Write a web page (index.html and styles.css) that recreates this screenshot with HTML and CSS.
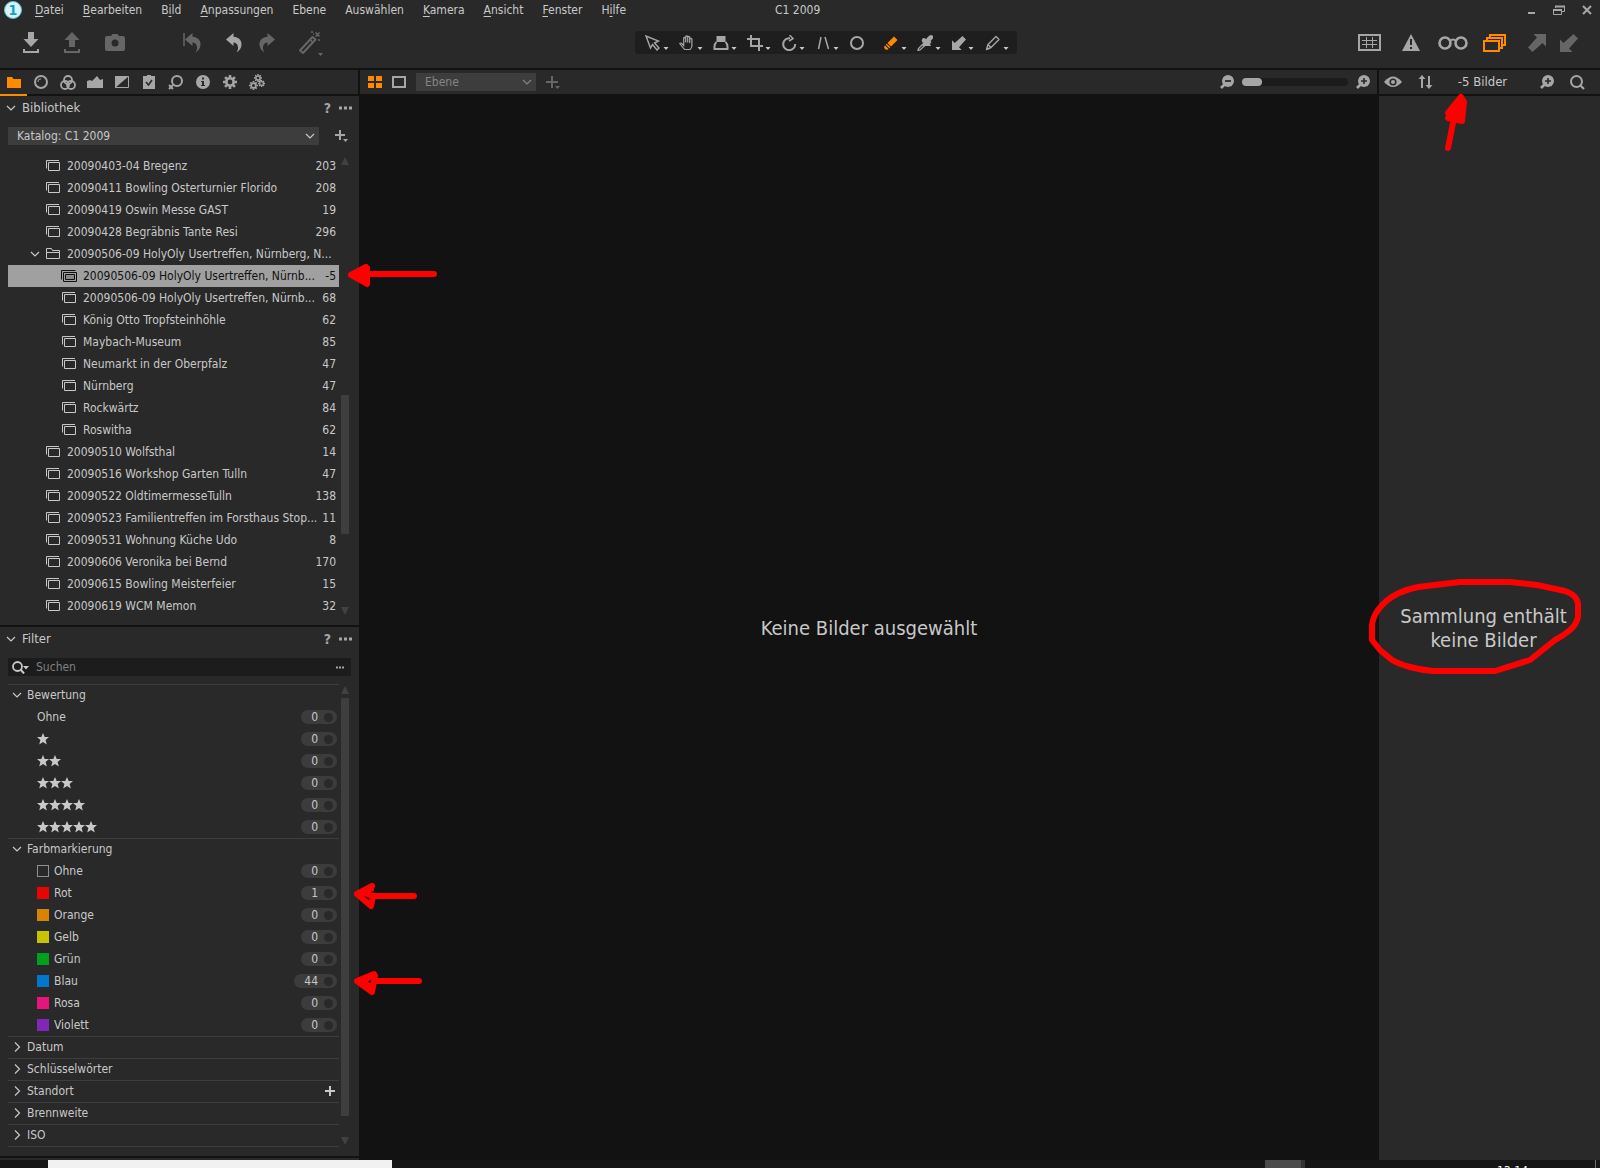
FILE: index.html
```html
<!DOCTYPE html>
<html lang="de">
<head>
  <meta charset="UTF-8" />
  <meta name="viewport" content="width=device-width, initial-scale=1" />
  <title>C1 2009</title>
  <link rel="stylesheet" href="styles.css">
</head>
<body>
  <!-- shared icons -->
  <svg class="defs" width="0" height="0" aria-hidden="true">
    <symbol id="star" viewBox="0 0 12 12"><path d="M6 0l1.700 4H12L8.600 6.900 9.800 11.600 6 8.900 2.200 11.600 3.400 6.900 0 4h4.300z" fill="currentColor" /></symbol>
    <symbol id="album" viewBox="0 0 15 12"><path d="M.5 8.500V.5h12.500M2.500 2.500h11v8h-11z" fill="none" stroke="currentColor" /></symbol>
    <symbol id="album-open" viewBox="0 0 16 13"><path d="M.5 9.500V.5h14M2.500 2.500h13v9h-13z" fill="none" stroke="currentColor" /><path d="M4.500 4.500h9v5h-9z" fill="#888" stroke="currentColor" /></symbol>
    <symbol id="folder" viewBox="0 0 15 12"><path d="M.5 10.500v-10h5l1 2h7v8zM.5 4.500h13" fill="none" stroke="currentColor" /></symbol>
    <symbol id="down" viewBox="0 0 10 10"><path d="M1 3l4 4 4-4" fill="none" stroke="currentColor" stroke-width="1.200" /></symbol>
    <symbol id="right" viewBox="0 0 10 10"><path d="M3 .5l4.500 4.500L3 9.500" fill="none" stroke="currentColor" stroke-width="1.200" /></symbol>
    <symbol id="caret" viewBox="0 0 6 4"><path d="M.5 0h5L3 3z" fill="currentColor" /></symbol>
    <symbol id="tri-up" viewBox="0 0 8 8"><path d="M4 0l4 8H0z" fill="currentColor" /></symbol>
    <symbol id="tri-down" viewBox="0 0 8 8"><path d="M4 8l4-8H0z" fill="currentColor" /></symbol>
    <symbol id="plus" viewBox="0 0 12 12"><path d="M6 1v10M1 6h10" stroke="currentColor" stroke-width="2" /></symbol>
    <symbol id="dots" viewBox="0 0 13 4"><path d="M0 .5h3v3H0zM5 .5h3v3H5zM10 .5h3v3h-3z" fill="currentColor" /></symbol>
    <symbol id="zoom-in" viewBox="0 0 14 14"><circle cx="8" cy="6" r="6" fill="currentColor" /><path d="M5 9l-4 4" stroke="currentColor" stroke-width="2.600" /><path d="M8 3v6M5 6h6" stroke="#292929" stroke-width="1.600" /></symbol>
    <symbol id="zoom-out" viewBox="0 0 14 14"><circle cx="8" cy="6" r="6" fill="currentColor" /><path d="M5 9l-4 4" stroke="currentColor" stroke-width="2.600" /><path d="M5 6h6" stroke="#292929" stroke-width="1.800" /></symbol>
    <symbol id="undo" viewBox="0 0 16 20"><path d="M0 6.500L7.500 0v3.800c6 .6 8.300 4.200 8 8.200-.2 3.200-2 5.800-5 7.500 1.500-2.500 2-4.500 1.200-6.700C11 10.700 9.800 9.800 7.500 9.600V13z" fill="currentColor" /></symbol>
    <symbol id="arrow-sw" viewBox="0 0 18 18"><path d="M0 5.500V18h12.500L9 14.500 18 4.500 13.500 0l-10 9z" fill="currentColor" /></symbol>
    <symbol id="gear" viewBox="0 0 14 14"><circle cx="7" cy="7" r="3.700" fill="none" stroke="currentColor" stroke-width="2.600" /><path d="M7 0v2.500M7 11.500V14M0 7h2.500M11.500 7H14M2.050 2.050l1.800 1.800M10.150 10.150l1.800 1.800M2.050 11.950l1.800-1.800M10.150 3.850l1.800-1.800" stroke="currentColor" stroke-width="2.600" /></symbol>
  </svg>

  <div class="app">
    <header class="menubar">
      <svg class="logo" width="18" height="18" viewBox="0 0 18 18"><circle cx="9" cy="9" r="8.500" fill="#d9f2fa" stroke="#5fb9d6" /><text x="9" y="14" text-anchor="middle" class="logo-text">1</text></svg>
      <nav class="menu">
        <a href="#"><u>D</u>atei</a>
        <a href="#"><u>B</u>earbeiten</a>
        <a href="#">B<u>i</u>ld</a>
        <a href="#"><u>A</u>npassungen</a>
        <a href="#">Ebene</a>
        <a href="#">Auswählen</a>
        <a href="#"><u>K</u>amera</a>
        <a href="#"><u>A</u>nsicht</a>
        <a href="#"><u>F</u>enster</a>
        <a href="#">H<u>i</u>lfe</a>
      </nav>
      <div class="title">C1 2009</div>
      <div class="window-buttons">
        <button type="button" aria-label="Minimieren"><svg width="12" height="12"><path d="M3 9h7" stroke="currentColor" stroke-width="2" /></svg></button>
        <button type="button" aria-label="Wiederherstellen"><svg width="12" height="12"><path d="M2.500 4V2.500h9v5H9" fill="none" stroke="currentColor" /><path d="M2 2.500h10M.5 6h8" stroke="currentColor" stroke-width="2" /><path d="M.5 5v5.500h8V5" fill="none" stroke="currentColor" /></svg></button>
        <button type="button" aria-label="Schließen"><svg width="12" height="12"><path d="M2 2l8 8M10 2l-8 8" stroke="currentColor" stroke-width="2" /></svg></button>
      </div>
    </header>

    <div class="toolbar">
      <div class="actions">
        <button type="button" aria-label="Importieren"><svg width="16" height="21"><path d="M5 0h6v7h4.500L8 15 .5 7H5zM0 17h2v2h12v-2h2v4H0z" fill="currentColor" /></svg></button>
        <button type="button" class="dim" aria-label="Exportieren"><svg width="16" height="21"><path d="M5 15h6V8h4.500L8 0 .5 8H5zM0 17h2v2h12v-2h2v4H0z" fill="currentColor" /></svg></button>
        <button type="button" class="dim" aria-label="Kamera"><svg width="20" height="18"><path d="M2 2h4l1.500-2h5L14 2h4q2 0 2 2v11q0 2-2 2H2q-2 0-2-2V4q0-2 2-2z" fill="currentColor" /><circle cx="10" cy="9" r="3.500" fill="#292929" /></svg></button>
        <button type="button" class="dim reset" aria-label="Zurücksetzen"><svg width="18" height="20" viewBox="0 0 18 20"><path d="M1 0v13" stroke="currentColor" stroke-width="1.500" /><use href="#undo" x="2" width="16" height="20" /></svg></button>
        <button type="button" aria-label="Rückgängig"><svg width="16" height="20"><use href="#undo" /></svg></button>
        <button type="button" class="dim redo" aria-label="Wiederholen"><svg width="16" height="20"><use href="#undo" transform="translate(16 0) scale(-1 1)" /></svg></button>
        <button type="button" class="dim wand" aria-label="Automatisch anpassen"><svg width="26" height="26" viewBox="0 0 26 26"><path d="M2 20.500L14.500 7l3 2.500L5 23z" fill="none" stroke="currentColor" stroke-width="2" stroke-linejoin="round" /><path d="M12 9.500l3 3" stroke="currentColor" stroke-width="1.500" /><path d="M17.500 2.500l4 4M21.500 2.500l-4 4M13 2h2M15 4h1M20 10h2" stroke="currentColor" stroke-width="1.500" /><path d="M20 23h5l-2.500 3z" fill="currentColor" /></svg></button>
      </div>

      <div class="tools">
        <button type="button" aria-label="Auswahl"><svg width="16" height="16"><path d="M1 1l4.500 12 2-3.500 4.500 5.500 2-2-4.500-5 4-2z" fill="none" stroke="currentColor" stroke-width="1.400" /></svg><svg class="caret" width="6" height="4"><use href="#caret" /></svg></button>
        <button type="button" aria-label="Verschieben"><svg width="16" height="16"><path d="M5.500 14.500L.7 8.500q.8-1 2 0l2 2V3q1-1 2 0v4.500V1.500q1-1 2 0v6V2q1-1 2 0v6V4q1-1 2.200 0v7q-.4 2.500-1.900 3.500z" fill="none" stroke="currentColor" stroke-width="1.200" /></svg><svg class="caret" width="6" height="4"><use href="#caret" /></svg></button>
        <button type="button" aria-label="Lupe"><svg width="16" height="16"><path d="M3.500 1h9v6h-9z" fill="currentColor" /><path d="M3.500 7Q1 9 1.500 14h13Q15 9 12.500 7" fill="none" stroke="currentColor" stroke-width="2" /></svg><svg class="caret" width="6" height="4"><use href="#caret" /></svg></button>
        <button type="button" aria-label="Zuschneiden"><svg width="16" height="16"><path d="M4 0v11h12M0 4h12v12" fill="none" stroke="currentColor" stroke-width="2" /></svg><svg class="caret" width="6" height="4"><use href="#caret" /></svg></button>
        <button type="button" aria-label="Drehen"><svg width="16" height="16"><path d="M9 3.200A6 6 0 1 0 14.200 9" fill="none" stroke="currentColor" stroke-width="2" /><path d="M8.500 0l3.500 3.500L8 6" fill="none" stroke="currentColor" stroke-width="1.500" /></svg><svg class="caret" width="6" height="4"><use href="#caret" /></svg></button>
        <button type="button" aria-label="Trapezkorrektur"><svg width="16" height="16"><path d="M6 2L3.500 14M10 2l3.500 12" stroke="currentColor" stroke-width="1.500" /></svg><svg class="caret" width="6" height="4"><use href="#caret" /></svg></button>
        <button type="button" aria-label="Flecken entfernen"><svg width="16" height="16"><circle cx="8" cy="8" r="6" fill="none" stroke="currentColor" stroke-width="2" /></svg></button>
        <button type="button" class="on" aria-label="Radierer"><svg width="16" height="16"><path d="M11 1.500L14.500 5l-6.500 6.500L4.500 8zM3.800 8.700l3.500 3.500-1 1-3.500-3.500zM2.100 10.400l3.500 3.500-.6.600q-2 .5-3.200-.7T1.500 11z" fill="currentColor" /></svg><svg class="caret" width="6" height="4"><use href="#caret" /></svg></button>
        <button type="button" aria-label="Pipette"><svg width="16" height="16"><path d="M10 3q3-4 5.500-2.500T13.500 6l1 1-1.500 2 1 2H5L7 8Q4 7 5 4.500T9 4z" fill="currentColor" /><path d="M7 8l-5.500 5.500-.5 2 2-.5L9 9.500" fill="none" stroke="currentColor" stroke-width="1.300" /></svg><svg class="caret" width="6" height="4"><use href="#caret" /></svg></button>
        <button type="button" aria-label="Anpassungen anwenden"><svg width="14" height="14"><use href="#arrow-sw" /></svg><svg class="caret" width="6" height="4"><use href="#caret" /></svg></button>
        <button type="button" aria-label="Pinsel"><svg width="16" height="16"><path d="M1.500 14.500l1.500-5 8-8 3 3-8 8zM3 9.500l3 3" fill="none" stroke="currentColor" stroke-width="1.400" stroke-linejoin="round" /></svg><svg class="caret" width="6" height="4"><use href="#caret" /></svg></button>
      </div>

      <div class="views">
        <button type="button" aria-label="Raster"><svg width="23" height="17"><path d="M1 1h21v15H1z" fill="none" stroke="currentColor" stroke-width="2" /><path d="M4 6.500h15M4 10.500h15M8.500 3v11M14.500 3v11" stroke="currentColor" /></svg></button>
        <button type="button" aria-label="Belichtungswarnung"><svg width="18" height="17"><path d="M9 0l9 17H0z" fill="currentColor" /><path d="M9 5v6M9 13v2" stroke="#292929" stroke-width="2" /></svg></button>
        <button type="button" aria-label="Proof"><svg width="30" height="14"><circle cx="7" cy="7" r="5.500" fill="none" stroke="currentColor" stroke-width="2.600" /><circle cx="23" cy="7" r="5.500" fill="none" stroke="currentColor" stroke-width="2.600" /><path d="M12 5q3-3 6 0" fill="none" stroke="currentColor" stroke-width="2" /></svg></button>
        <button type="button" class="on" aria-label="Varianten"><svg width="24" height="18"><path d="M1 7h15v10H1zM4 6V4h15v10h-2M7 3V1h15v10h-2" fill="none" stroke="currentColor" stroke-width="2" /></svg></button>
        <button type="button" class="dim" aria-label="Kopieren"><svg width="18" height="18"><use href="#arrow-sw" transform="rotate(180 9 9)" /></svg></button>
        <button type="button" class="dim" aria-label="Anwenden"><svg width="18" height="18"><use href="#arrow-sw" /></svg></button>
      </div>
    </div>

    <main class="workspace">
      <aside class="sidebar">
        <div class="tabs">
          <button type="button" class="on" aria-label="Bibliothek"><svg width="14" height="12"><path d="M0 1h5l1.500 2H14v9H0z" fill="currentColor" /></svg></button>
          <button type="button" aria-label="Aufnahme"><svg width="14" height="14"><circle cx="7" cy="7" r="6" fill="none" stroke="currentColor" stroke-width="2" /><path d="M3.800 7A3.200 3.200 0 0 1 7 3.800" fill="none" stroke="currentColor" /></svg></button>
          <button type="button" aria-label="Farbe"><svg width="16" height="15"><g fill="none" stroke="currentColor" stroke-width="1.800"><circle cx="8" cy="5" r="4" /><circle cx="5" cy="10" r="4" /><circle cx="11" cy="10" r="4" /></g></svg></button>
          <button type="button" aria-label="Belichtung"><svg width="16" height="12"><path d="M0 12V5l3-1 2 1 5-5 3 4 3-1v9z" fill="currentColor" /></svg></button>
          <button type="button" aria-label="Details"><svg width="14" height="12"><path d="M.5.5h13v11H.5z" fill="none" stroke="currentColor" /><path d="M0 0h14L0 12z" fill="currentColor" /></svg></button>
          <button type="button" aria-label="Anpassungen"><svg width="12" height="14"><path d="M0 1h4V0h4v1h4v13H0z" fill="currentColor" /><path d="M3 7l2.500 3L9 5" fill="none" stroke="#292929" stroke-width="1.600" /></svg></button>
          <button type="button" aria-label="Objektiv"><svg width="15" height="15"><circle cx="9" cy="6" r="5" fill="none" stroke="currentColor" stroke-width="2" /><path d="M5 10l-4 4M1 10l4 4" stroke="currentColor" stroke-width="1.900" /></svg></button>
          <button type="button" aria-label="Metadaten"><svg width="14" height="14"><circle cx="7" cy="7" r="7" fill="currentColor" /><path d="M6 2.500h2v2H6zM5 6h3v4h1v1H5v-1h1V7H5z" fill="#292929" /></svg></button>
          <button type="button" aria-label="Ausgabe"><svg width="14" height="14"><use href="#gear" /></svg></button>
          <button type="button" aria-label="Stapel"><svg width="16" height="16"><use href="#gear" x="5" y="0" width="8" height="8" /><use href="#gear" x="0" y="7" width="9" height="9" /><use href="#gear" x="9" y="6" width="7" height="7" /></svg></button>
        </div>

        <section class="panel library">
          <div class="panel-head">
            <svg width="10" height="10"><use href="#down" /></svg>
            <h2>Bibliothek</h2>
            <button type="button" class="help">?</button>
            <button type="button" aria-label="Menü"><svg width="13" height="4"><use href="#dots" /></svg></button>
          </div>
          <div class="catalog">
            <div class="select">
              <select aria-label="Katalog"><option>Katalog: C1 2009</option></select>
              <svg width="10" height="10"><use href="#down" /></svg>
            </div>
            <button type="button" aria-label="Hinzufügen"><svg width="13" height="13"><path d="M5 0v10M0 5h10" stroke="currentColor" stroke-width="2" /><path d="M8 9h5l-2.500 3z" fill="currentColor" /></svg></button>
          </div>
          <div class="scroll-area">
            <ul class="tree">
              <li><svg width="15" height="12"><use href="#album" /></svg><span>20090403-04 Bregenz</span><b>203</b></li>
              <li><svg width="15" height="12"><use href="#album" /></svg><span>20090411 Bowling Osterturnier Florido</span><b>208</b></li>
              <li><svg width="15" height="12"><use href="#album" /></svg><span>20090419 Oswin Messe GAST</span><b>19</b></li>
              <li><svg width="15" height="12"><use href="#album" /></svg><span>20090428 Begräbnis Tante Resi</span><b>296</b></li>
              <li class="group"><svg width="10" height="10"><use href="#down" /></svg><svg width="15" height="12"><use href="#folder" /></svg><span>20090506-09 HolyOly Usertreffen, Nürnberg, N...</span></li>
              <li class="sub selected"><svg width="16" height="13"><use href="#album-open" /></svg><span>20090506-09 HolyOly Usertreffen, Nürnb...</span><b>-5</b></li>
              <li class="sub"><svg width="15" height="12"><use href="#album" /></svg><span>20090506-09 HolyOly Usertreffen, Nürnb...</span><b>68</b></li>
              <li class="sub"><svg width="15" height="12"><use href="#album" /></svg><span>König Otto Tropfsteinhöhle</span><b>62</b></li>
              <li class="sub"><svg width="15" height="12"><use href="#album" /></svg><span>Maybach-Museum</span><b>85</b></li>
              <li class="sub"><svg width="15" height="12"><use href="#album" /></svg><span>Neumarkt in der Oberpfalz</span><b>47</b></li>
              <li class="sub"><svg width="15" height="12"><use href="#album" /></svg><span>Nürnberg</span><b>47</b></li>
              <li class="sub"><svg width="15" height="12"><use href="#album" /></svg><span>Rockwärtz</span><b>84</b></li>
              <li class="sub"><svg width="15" height="12"><use href="#album" /></svg><span>Roswitha</span><b>62</b></li>
              <li><svg width="15" height="12"><use href="#album" /></svg><span>20090510 Wolfsthal</span><b>14</b></li>
              <li><svg width="15" height="12"><use href="#album" /></svg><span>20090516 Workshop Garten Tulln</span><b>47</b></li>
              <li><svg width="15" height="12"><use href="#album" /></svg><span>20090522 OldtimermesseTulln</span><b>138</b></li>
              <li><svg width="15" height="12"><use href="#album" /></svg><span>20090523 Familientreffen im Forsthaus Stop...</span><b>11</b></li>
              <li><svg width="15" height="12"><use href="#album" /></svg><span>20090531 Wohnung Küche Udo</span><b>8</b></li>
              <li><svg width="15" height="12"><use href="#album" /></svg><span>20090606 Veronika bei Bernd</span><b>170</b></li>
              <li><svg width="15" height="12"><use href="#album" /></svg><span>20090615 Bowling Meisterfeier</span><b>15</b></li>
              <li><svg width="15" height="12"><use href="#album" /></svg><span>20090619 WCM Memon</span><b>32</b></li>
            </ul>
            <div class="scrollbar">
              <svg width="8" height="8"><use href="#tri-up" /></svg>
              <div class="track"><div class="thumb tree-thumb"></div></div>
              <svg width="8" height="8"><use href="#tri-down" /></svg>
            </div>
          </div>
        </section>

        <section class="panel filter">
          <div class="panel-head">
            <svg width="10" height="10"><use href="#down" /></svg>
            <h2>Filter</h2>
            <button type="button" class="help">?</button>
            <button type="button" aria-label="Menü"><svg width="13" height="4"><use href="#dots" /></svg></button>
          </div>
          <div class="search">
            <svg width="17" height="13"><circle cx="5.500" cy="5.500" r="4.500" fill="none" stroke="currentColor" stroke-width="1.800" /><path d="M8.500 8.500l3.500 4" stroke="currentColor" stroke-width="2" /><path d="M11 5h6l-3 3.500z" fill="currentColor" /></svg>
            <input type="text" placeholder="Suchen" aria-label="Suchen" />
            <button type="button" aria-label="Suchoptionen"><svg width="8" height="3"><path d="M0 .5h2v2H0zM3 .5h2v2H3zM6 .5h2v2H6z" fill="currentColor" /></svg></button>
          </div>
          <div class="scroll-area">
            <div class="filters">
              <h3><svg width="10" height="10"><use href="#down" /></svg>Bewertung</h3>
              <ul>
                <li><span>Ohne</span><label class="pill">0<input type="checkbox" /></label></li>
                <li><svg class="stars" width="60" height="12"><use href="#star" width="12" /></svg><label class="pill">0<input type="checkbox" /></label></li>
                <li><svg class="stars" width="60" height="12"><use href="#star" width="12" /><use href="#star" x="12" width="12" /></svg><label class="pill">0<input type="checkbox" /></label></li>
                <li><svg class="stars" width="60" height="12"><use href="#star" width="12" /><use href="#star" x="12" width="12" /><use href="#star" x="24" width="12" /></svg><label class="pill">0<input type="checkbox" /></label></li>
                <li><svg class="stars" width="60" height="12"><use href="#star" width="12" /><use href="#star" x="12" width="12" /><use href="#star" x="24" width="12" /><use href="#star" x="36" width="12" /></svg><label class="pill">0<input type="checkbox" /></label></li>
                <li><svg class="stars" width="60" height="12"><use href="#star" width="12" /><use href="#star" x="12" width="12" /><use href="#star" x="24" width="12" /><use href="#star" x="36" width="12" /><use href="#star" x="48" width="12" /></svg><label class="pill">0<input type="checkbox" /></label></li>
              </ul>
              <h3><svg width="10" height="10"><use href="#down" /></svg>Farbmarkierung</h3>
              <ul>
                <li><i class="swatch none"></i><span>Ohne</span><label class="pill">0<input type="checkbox" /></label></li>
                <li><i class="swatch red"></i><span>Rot</span><label class="pill">1<input type="checkbox" /></label></li>
                <li><i class="swatch orange"></i><span>Orange</span><label class="pill">0<input type="checkbox" /></label></li>
                <li><i class="swatch yellow"></i><span>Gelb</span><label class="pill">0<input type="checkbox" /></label></li>
                <li><i class="swatch green"></i><span>Grün</span><label class="pill">0<input type="checkbox" /></label></li>
                <li><i class="swatch blue"></i><span>Blau</span><label class="pill">44<input type="checkbox" /></label></li>
                <li><i class="swatch pink"></i><span>Rosa</span><label class="pill">0<input type="checkbox" /></label></li>
                <li><i class="swatch violet"></i><span>Violett</span><label class="pill">0<input type="checkbox" /></label></li>
              </ul>
              <h3><svg width="10" height="10"><use href="#right" /></svg>Datum</h3>
              <h3><svg width="10" height="10"><use href="#right" /></svg>Schlüsselwörter</h3>
              <h3><svg width="10" height="10"><use href="#right" /></svg>Standort<button type="button" aria-label="Standort hinzufügen"><svg width="12" height="12"><use href="#plus" /></svg></button></h3>
              <h3><svg width="10" height="10"><use href="#right" /></svg>Brennweite</h3>
              <h3><svg width="10" height="10"><use href="#right" /></svg>ISO</h3>
            </div>
            <div class="scrollbar">
              <svg width="8" height="8"><use href="#tri-up" /></svg>
              <div class="track"><div class="thumb filter-thumb"></div></div>
              <svg width="8" height="8"><use href="#tri-down" /></svg>
            </div>
          </div>
        </section>
      </aside>

      <section class="viewer">
        <div class="viewer-bar">
          <button type="button" class="on" aria-label="Mehrfachansicht"><svg width="14" height="12"><path d="M0 0h6v5H0zM8 0h6v5H8zM0 7h6v5H0zM8 7h6v5H8z" fill="currentColor" /></svg></button>
          <button type="button" aria-label="Einzelansicht"><svg width="14" height="12"><path d="M1 1h12v10H1z" fill="none" stroke="currentColor" stroke-width="2" /></svg></button>
          <div class="select layer">
            <select aria-label="Ebene" disabled><option>Ebene</option></select>
            <svg width="10" height="10"><use href="#down" /></svg>
          </div>
          <button type="button" class="dim" aria-label="Ebene hinzufügen"><svg width="14" height="13"><path d="M6 0v12M0 6h12" stroke="currentColor" stroke-width="2" /><path d="M9 10h5l-2.500 3z" fill="currentColor" /></svg></button>
          <div class="zoom">
            <button type="button" aria-label="Verkleinern"><svg width="14" height="14"><use href="#zoom-out" /></svg></button>
            <input type="range" min="0" max="100" value="0" aria-label="Zoom" />
            <button type="button" aria-label="Vergrößern"><svg width="14" height="14"><use href="#zoom-in" /></svg></button>
          </div>
        </div>
        <p class="empty">Keine Bilder ausgewählt</p>
      </section>

      <section class="browser">
        <div class="browser-bar">
          <button type="button" aria-label="Anzeigen"><svg width="18" height="12"><path d="M0 6Q9-5 18 6 9 16 0 6z" fill="currentColor" /><circle cx="9" cy="6" r="3.600" fill="#292929" /><circle cx="9" cy="6" r="2" fill="currentColor" /></svg></button>
          <button type="button" aria-label="Sortieren"><svg width="15" height="14"><path d="M4 0l3.500 4H5v9H3V4H.5zM11 14l3.500-4H12V1h-2v9H7.500z" fill="currentColor" /></svg></button>
          <span>-5 Bilder</span>
          <button type="button" aria-label="Miniaturgröße"><svg width="14" height="14"><use href="#zoom-in" /></svg></button>
          <button type="button" aria-label="Suche"><svg width="15" height="15"><circle cx="6.500" cy="6.500" r="5.500" fill="none" stroke="currentColor" stroke-width="2" /><path d="M10.500 10.500l3.500 3.500" stroke="currentColor" stroke-width="2.200" /></svg></button>
        </div>
        <p class="empty">Sammlung enthält<br>keine Bilder</p>
      </section>
    </main>

    <footer class="taskbar">
      <div class="task-search"></div>
      <div class="task-item"></div>
      <div class="clock">13:14</div>
    </footer>
  </div>

  <!-- hand-drawn markers -->
  <svg class="markers" width="1600" height="1168" fill="none" stroke="#f00" stroke-width="6" stroke-linecap="round" stroke-linejoin="round" aria-hidden="true">
    <path d="M434 274H362M366 267l-15 8 16 9V268l-10 6 8 3" />
    <path d="M414 896H372M372 886l-15 8 14 12 2-10-12-4 10-3" />
    <path d="M419 981H374M374 974l-17 7 15 11 3-16-13 4 8 7" />
    <path d="M1448 148l7-35M1448 113l13-16 3 5-2 19-14-3 7-2 5-13 1 14" />
    <path d="M1460 582h50l27 3 28 6q12 4 13 13v13q-2 8-8 13-7 6-15 10l-10 8-15 12-35 11h-62q-12-1-23-4-11-3-18-7l-12-10-8-10v-15q1-8 6-15 8-11 21-17 9-4 19-6z" />
  </svg>
</body>
</html>
```
FILE: styles.css
```css
:root {
  --bg: #292929;
  --dark: #121212;
  --field: #3d3d3d;
  --text: #c8c8c8;
  --icon: #a6a6a6;
  --dim: #666666;
  --accent: #ff8a00;
}

* {
  box-sizing: border-box;
}

body {
  margin: 0;
  background: var(--bg);
  color: var(--text);
  font-family: "DejaVu Sans Condensed", "Noto Sans", sans-serif;
  font-size: 12px;
  line-height: 16px;
}

h2, h3, p, ul {
  margin: 0;
  padding: 0;
  font-weight: normal;
  font-size: 12px;
}

ul {
  list-style: none;
}

svg {
  display: block;
  flex: none;
}

.defs {
  position: absolute;
}

button {
  display: flex;
  align-items: center;
  justify-content: center;
  padding: 0;
  border: none;
  background: none;
  color: var(--icon);
  font: inherit;
}

.dim {
  color: var(--dim);
}

.on {
  color: var(--accent);
}

select,
input {
  font: inherit;
  color: inherit;
}

.app {
  display: flex;
  flex-direction: column;
  min-height: 100vh;
}

/* Menu and title */
.menubar {
  display: flex;
  align-items: center;
  height: 20px;
  padding-left: 4px;
}

.logo-text {
  font: bold 14px "DejaVu Sans Condensed", sans-serif;
  fill: #0aa0cc;
}

.menu {
  display: flex;
  gap: 19px;
  margin-left: 13px;
}

.menu a {
  color: var(--text);
  text-decoration: none;
}

.menu u {
  text-underline-offset: 2px;
}

.title {
  flex: 1;
  padding-left: 149px;
}

.window-buttons {
  display: flex;
  gap: 16px;
  padding-right: 7px;
}

/* Toolbar */
.toolbar {
  display: flex;
  justify-content: space-between;
  align-items: center;
  height: 50px;
  padding: 0 20px 3px 23px;
  border-bottom: 2px solid var(--dark);
}

.actions,
.views {
  display: flex;
  align-items: center;
}

.actions {
  gap: 25px;
}

.actions .reset {
  margin-left: 33px;
}

.actions .redo {
  margin-left: -8px;
}

.actions .wand {
  margin-left: -2px;
}

.tools {
  display: flex;
  padding: 0 4px;
  background: #1e1e1e;
  border-radius: 4px;
}

.tools button {
  gap: 2px;
  width: 34px;
  height: 23px;
  padding-left: 2px;
}

.tools button:not(:has(.caret)) {
  padding-right: 8px;
}

.tools .caret {
  align-self: flex-end;
  margin-bottom: 3px;
  color: var(--text);
}

.views {
  padding-left: 21px;
}

.views button {
  width: 42px;
}

.views button:last-child {
  width: 22px;
}

/* Main columns */
.workspace {
  flex: 1;
  display: grid;
  grid-template-columns: 359px 1fr 221px;
}

.tabs,
.viewer-bar,
.browser-bar {
  display: flex;
  align-items: center;
  height: 26px;
  border-bottom: 2px solid var(--dark);
}

.tabs {
  border-right: 1px solid var(--dark);
}

.tabs button {
  width: 27px;
  height: 26px;
  align-self: flex-start;
  border-bottom: 2px solid transparent;
}

.tabs .on {
  border-bottom-color: var(--accent);
}

.panel-head {
  display: flex;
  align-items: center;
  gap: 8px;
  height: 24px;
  padding: 0 7px 0 6px;
}

.panel-head h2 {
  flex: 1;
  margin-left: -2px;
  font-size: 13px;
}

.help {
  font-size: 14px;
  font-weight: bold;
}

.catalog {
  display: flex;
  align-items: center;
  gap: 16px;
  padding: 7px 11px 10px 8px;
}

.select {
  position: relative;
  flex: 1;
}

.select select {
  display: block;
  width: 100%;
  height: 18px;
  padding: 0 9px;
  border: none;
  border-radius: 0;
  appearance: none;
  background: var(--field);
  opacity: 1;
}

.select svg {
  position: absolute;
  top: 4px;
  right: 4px;
  pointer-events: none;
}

.scroll-area {
  display: flex;
  gap: 2px;
  padding: 0 10px 0 8px;
}

.tree,
.filters {
  flex: 1;
}

.tree li {
  display: flex;
  align-items: center;
  height: 22px;
  padding: 0 3px 0 38px;
  white-space: nowrap;
}

.tree li svg {
  margin-right: 6px;
}

.tree span {
  flex: 1;
  min-width: 0;
}

.tree b {
  font-weight: normal;
}

.tree .group {
  padding-left: 22px;
}

.tree .sub {
  padding-left: 54px;
}

.tree .selected {
  padding-left: 53px;
  background: #a0a0a0;
  color: #101010;
}

.scrollbar {
  display: flex;
  flex-direction: column;
  gap: 4px;
  width: 8px;
  padding: 2px 0;
  color: #414141;
}

.track {
  position: relative;
  flex: 1;
}

.thumb {
  position: absolute;
  width: 8px;
  background: #3e3e3e;
}

.tree-thumb {
  top: 52%;
  height: 32%;
}

.filter-thumb {
  top: 0;
  height: 96%;
}

.library {
  padding-bottom: 8px;
  border-bottom: 2px solid var(--dark);
}

.filter {
  padding-bottom: 9px;
  border-bottom: 2px solid var(--dark);
}

.search {
  display: flex;
  align-items: center;
  height: 18px;
  margin: 7px 8px 8px;
  padding: 0 7px 0 4px;
  background: #1c1c1c;
}

.search input {
  flex: 1;
  min-width: 0;
  margin-left: 7px;
  padding: 0;
  border: none;
  background: none;
}

.search input::placeholder {
  color: #808080;
}

.filters {
  border-bottom: 1px solid var(--field);
}

.filters h3 {
  display: flex;
  align-items: center;
  gap: 5px;
  height: 22px;
  padding: 0 3px 2px 4px;
  border-top: 1px solid var(--field);
}

.filters h3 button {
  margin-left: auto;
  color: var(--text);
}

.filters li {
  display: flex;
  align-items: center;
  height: 22px;
  padding: 0 2px 0 29px;
}

.swatch {
  width: 12px;
  height: 12px;
  margin-right: 5px;
}

.none { border: 1px solid #909090; }
.red { background: #e60505; }
.orange { background: #d88400; }
.yellow { background: #c6c400; }
.green { background: #00a01c; }
.blue { background: #0076cc; }
.pink { background: #e6157c; }
.violet { background: #8127b5; }

.pill {
  display: flex;
  align-items: center;
  gap: 6px;
  height: 14px;
  margin-left: auto;
  padding: 0 4px 0 10px;
  border-radius: 7px;
  background: #3c3c3c;
}

.pill input {
  appearance: none;
  width: 9px;
  height: 9px;
  margin: 0;
  border-radius: 50%;
  background: var(--bg);
}

/* Viewer */
.viewer,
.browser {
  display: flex;
  flex-direction: column;
}

.viewer {
  background: var(--dark);
}

.viewer-bar {
  gap: 10px;
  padding: 0 9px 0 8px;
  border-left: 1px solid var(--dark);
  background: var(--bg);
}

.layer {
  flex: none;
  width: 120px;
  color: #858585;
}

.zoom {
  display: flex;
  align-items: center;
  gap: 8px;
  margin-left: auto;
}

.zoom input {
  appearance: none;
  width: 106px;
  height: 8px;
  margin: 0;
  border-radius: 4px;
  background: #1c1c1c;
}

.zoom input::-webkit-slider-thumb {
  appearance: none;
  width: 20px;
  height: 8px;
  border-radius: 4px;
  background: var(--icon);
}

.empty {
  flex: 1;
  display: flex;
  align-items: center;
  justify-content: center;
  text-align: center;
  font-size: 20px;
  line-height: 24px;
}

/* Browser */
.browser-bar {
  gap: 16px;
  padding: 0 15px 0 5px;
  box-shadow: -2px 0 0 var(--dark);
}

.browser-bar span {
  flex: 1;
  padding-right: 8px;
  text-align: center;
  font-size: 13px;
}

.browser .empty {
  padding-right: 12px;
}

/* Taskbar */
.taskbar {
  display: flex;
  height: 8px;
  padding: 0 4px 0 48px;
  overflow: hidden;
  background: #161616;
}

.task-search {
  width: 344px;
  background: #f1f1f1;
}

.task-item {
  width: 40px;
  margin-left: auto;
  border-right: 4px solid #333333;
  background: #4b4b4b;
}

.clock {
  width: 291px;
  padding: 3px 67px 0 0;
  border-right: 1px solid #707070;
  color: #ffffff;
  text-align: right;
}

.markers {
  position: absolute;
  top: 0;
  left: 0;
  pointer-events: none;
}
```
